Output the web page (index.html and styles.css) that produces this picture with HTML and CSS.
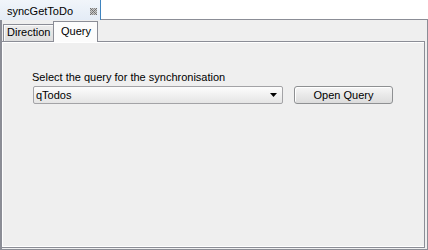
FILE: index.html
```
<!DOCTYPE html>
<html>
<head>
<meta charset="utf-8">
<link rel="stylesheet" href="styles.css">
</head>
<body>
<div class="view">
  <div class="viewtabs">
    <div class="vtab">
      <span class="vtab-title">syncGetToDo</span>
      <svg class="vtab-close" width="7" height="7" viewBox="0 0 7 7" shape-rendering="crispEdges">
        <rect x="0" y="0" width="7" height="7" fill="#c8c8c8"/>
        <rect x="0" y="0" width="1" height="1" fill="#6e6e6e"/>
        <rect x="2" y="0" width="1" height="1" fill="#8a8a8a"/>
        <rect x="4" y="0" width="1" height="1" fill="#8a8a8a"/>
        <rect x="6" y="0" width="1" height="1" fill="#6e6e6e"/>
        <rect x="1" y="1" width="1" height="1" fill="#6e6e6e"/>
        <rect x="3" y="1" width="1" height="1" fill="#9a9a9a"/>
        <rect x="5" y="1" width="1" height="1" fill="#6e6e6e"/>
        <rect x="0" y="2" width="1" height="1" fill="#8a8a8a"/>
        <rect x="2" y="2" width="1" height="1" fill="#6e6e6e"/>
        <rect x="4" y="2" width="1" height="1" fill="#6e6e6e"/>
        <rect x="6" y="2" width="1" height="1" fill="#8a8a8a"/>
        <rect x="1" y="3" width="1" height="1" fill="#9a9a9a"/>
        <rect x="3" y="3" width="1" height="1" fill="#6e6e6e"/>
        <rect x="5" y="3" width="1" height="1" fill="#9a9a9a"/>
        <rect x="0" y="4" width="1" height="1" fill="#8a8a8a"/>
        <rect x="2" y="4" width="1" height="1" fill="#6e6e6e"/>
        <rect x="4" y="4" width="1" height="1" fill="#6e6e6e"/>
        <rect x="6" y="4" width="1" height="1" fill="#8a8a8a"/>
        <rect x="1" y="5" width="1" height="1" fill="#6e6e6e"/>
        <rect x="3" y="5" width="1" height="1" fill="#9a9a9a"/>
        <rect x="5" y="5" width="1" height="1" fill="#6e6e6e"/>
        <rect x="0" y="6" width="1" height="1" fill="#6e6e6e"/>
        <rect x="2" y="6" width="1" height="1" fill="#8a8a8a"/>
        <rect x="4" y="6" width="1" height="1" fill="#8a8a8a"/>
        <rect x="6" y="6" width="1" height="1" fill="#6e6e6e"/>
      </svg>
    </div>
    <div class="vspacer"></div>
  </div>
  <div class="vbody">
    <div class="tabstrip">
      <div class="itab itab-dir">Direction</div>
      <div class="itab itab-query">Query</div>
    </div>
    <div class="panel">
      <div class="label">Select the query for the synchronisation</div>
      <div class="row">
        <div class="combo">
          <span class="combo-text">qTodos</span>
          <svg class="combo-arrow" width="7" height="4" viewBox="0 0 7 4">
            <polygon points="0,0 7,0 3.5,4" fill="#000"/>
          </svg>
        </div>
        <div class="button">Open Query</div>
      </div>
    </div>
  </div>
</div>
</body>
</html>
```
FILE: styles.css
```
* { box-sizing: border-box; }
html, body {
  margin: 0;
  padding: 0;
  background: #ffffff;
}
body {
  font-family: "Liberation Sans", Arial, sans-serif;
  font-size: 11px;
  line-height: 13px;
  color: #000;
}
.view {
  width: 428px;
  height: 250px;
  display: flex;
  flex-direction: column;
}
.viewtabs {
  display: flex;
  height: 20px;
  flex: none;
}
.vtab {
  width: 101px;
  height: 20px;
  background: linear-gradient(#f1f5fa, #e4ecf6);
  border-right: 1px solid #3f84bf;
  padding: 5px 3px 0 7px;
  display: flex;
  align-items: flex-start;
}
.vtab-close {
  margin-left: auto;
  margin-top: 3px;
  display: block;
}
.vspacer {
  flex: 1;
  border-bottom: 1px solid #8b8d96;
}
.vbody {
  flex: 1;
  display: flex;
  flex-direction: column;
  background: #efefef;
  border-left: 2px solid #8b8d96;
  border-right: 1px solid #8b8d96;
  border-bottom: 1px solid #8b8d96;
  padding: 0 2px 1px 0;
}
.tabstrip {
  display: flex;
  align-items: flex-end;
  height: 20px;
  margin-top: 1px;
  padding-left: 1px;
  flex: none;
}
.itab {
  border: 1px solid #8b8d96;
  border-bottom: none;
  white-space: nowrap;
}
.itab-dir {
  width: 51px;
  height: 17px;
  padding: 1px 0 0 3px;
  background: linear-gradient(#ececec, #dedede);
  box-shadow: inset 1px 1px 0 #fafafa;
}
.itab-query {
  width: 45px;
  height: 21px;
  margin-left: -1px;
  margin-bottom: -1px;
  padding: 3px 0 0 7px;
  background: #fcfcfc;
  position: relative;
  z-index: 1;
}
.panel {
  flex: 1;
  border-top: 1px solid #8b8d96;
  border-right: 1px solid #8b8d96;
  border-bottom: 1px solid #8b8d96;
  box-shadow: inset 1px 1px 0 #ffffff, inset 0 -1px 0 #ffffff;
  padding: 29px 0 0 30px;
}
.label {
  line-height: 13px;
}
.row {
  display: flex;
  gap: 11px;
  margin-top: 2px;
}
.combo {
  width: 250px;
  height: 18px;
  margin-left: 1px;
  border: 1px solid #a3a3a6;
  border-radius: 2px;
  background: linear-gradient(#fdfdfd, #e5e5e5);
  display: flex;
  align-items: center;
  justify-content: space-between;
  padding: 0 5px 0 2px;
}
.combo-arrow {
  display: block;
}
.button {
  width: 99px;
  height: 18px;
  border: 1px solid #8e9092;
  border-radius: 3px;
  background: linear-gradient(#f6f6f6, #dcdcdc);
  box-shadow: inset 1px 1px 0 #ffffff;
  display: flex;
  align-items: center;
  justify-content: center;
}
```
